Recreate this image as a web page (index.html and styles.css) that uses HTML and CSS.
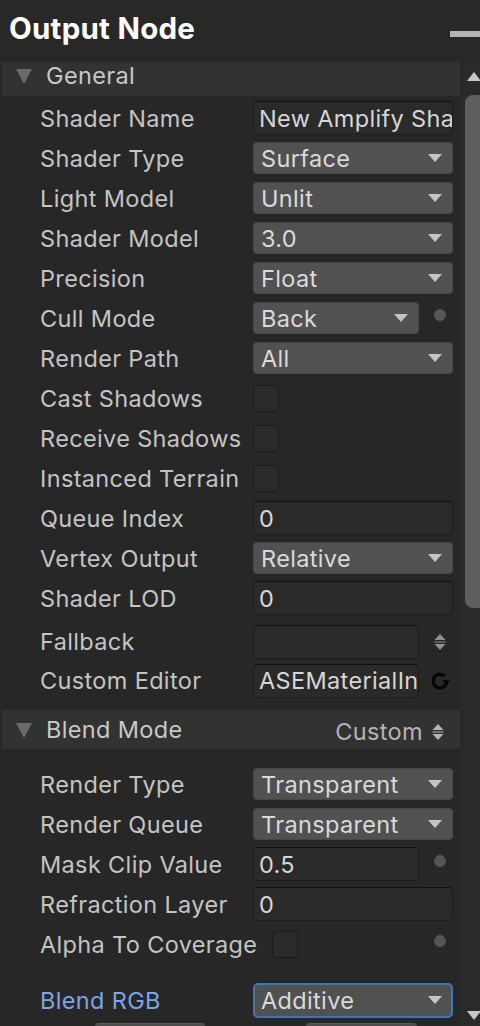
FILE: index.html
```html
<!DOCTYPE html>
<html>
<head>
<meta charset="utf-8">
<link rel="stylesheet" href="styles.css">
</head>
<body>
<div class="titlebar">
  <span class="title">Output Node</span>
  <span class="minbar"></span>
</div>
<div class="main">
  <div class="panel">
    <div class="section-head general"><span class="tri"></span><span class="head-text">General</span></div>
    <div class="rows first">
      <div class="row"><span class="label">Shader Name</span><div class="control"><div class="field text">New Amplify Shader</div></div></div>
      <div class="row"><span class="label">Shader Type</span><div class="control"><div class="field dd">Surface<span class="arrow"></span></div></div></div>
      <div class="row"><span class="label">Light Model</span><div class="control"><div class="field dd">Unlit<span class="arrow"></span></div></div></div>
      <div class="row"><span class="label">Shader Model</span><div class="control"><div class="field dd">3.0<span class="arrow"></span></div></div></div>
      <div class="row"><span class="label">Precision</span><div class="control"><div class="field dd">Float<span class="arrow"></span></div></div></div>
      <div class="row"><span class="label">Cull Mode</span><div class="control"><div class="field dd">Back<span class="arrow"></span></div><span class="icon"><span class="dot"></span></span></div></div>
      <div class="row"><span class="label">Render Path</span><div class="control"><div class="field dd">All<span class="arrow"></span></div></div></div>
      <div class="row"><span class="label">Cast Shadows</span><div class="control"><span class="check"></span></div></div>
      <div class="row"><span class="label">Receive Shadows</span><div class="control"><span class="check"></span></div></div>
      <div class="row"><span class="label">Instanced Terrain</span><div class="control"><span class="check"></span></div></div>
      <div class="row"><span class="label">Queue Index</span><div class="control"><div class="field text">0</div></div></div>
      <div class="row"><span class="label">Vertex Output</span><div class="control"><div class="field dd">Relative<span class="arrow"></span></div></div></div>
      <div class="row"><span class="label">Shader LOD</span><div class="control"><div class="field text">0</div></div></div>
    </div>
    <div class="rows tight">
      <div class="row"><span class="label">Fallback</span><div class="control"><div class="field text"></div><span class="icon">
        <svg width="12" height="18" viewBox="0 0 12 18"><path d="M6 1 L11.5 7 L0.5 7 Z M0.5 11 L11.5 11 L6 17 Z" fill="#8f8f8f"/><rect x="0.5" y="8.5" width="11" height="1" fill="#8f8f8f"/></svg>
      </span></div></div>
      <div class="row"><span class="label">Custom Editor</span><div class="control"><div class="field text">ASEMaterialInspector</div><span class="icon">
        <svg width="20" height="20" viewBox="0 0 20 20"><path d="M14.6 5.2 A6.8 6.8 0 1 0 16.6 11.2" fill="none" stroke="#050505" stroke-width="3.2"/><path d="M12.2 9 L19.8 9 L16.4 14 Z" fill="#050505"/></svg>
      </span></div></div>
    </div>
    <div class="section-head blend"><span class="tri"></span><span class="head-text">Blend Mode</span><span class="head-right">Custom<svg width="12" height="18" viewBox="0 0 12 18"><path d="M6 1 L11.5 7 L0.5 7 Z M0.5 11 L11.5 11 L6 17 Z" fill="#b4b4b4"/><rect x="0.5" y="8.5" width="11" height="1" fill="#b4b4b4"/></svg></span></div>
    <div class="rows second">
      <div class="row"><span class="label">Render Type</span><div class="control"><div class="field dd">Transparent<span class="arrow"></span></div></div></div>
      <div class="row"><span class="label">Render Queue</span><div class="control"><div class="field dd">Transparent<span class="arrow"></span></div></div></div>
      <div class="row"><span class="label">Mask Clip Value</span><div class="control"><div class="field text">0.5</div><span class="icon"><span class="dot"></span></span></div></div>
      <div class="row"><span class="label">Refraction Layer</span><div class="control"><div class="field text">0</div></div></div>
      <div class="row"><span class="label">Alpha To Coverage</span><div class="control"><span class="check shifted"></span><span class="spacer"></span><span class="icon"><span class="dot"></span></span></div></div>
    </div>
    <div class="rows third">
      <div class="row"><span class="label active">Blend RGB</span><div class="control"><div class="field dd focus">Additive<span class="arrow"></span></div></div></div>
    </div>
    <div class="partial">
      <span class="pbox one"></span>
      <span class="pbox two"></span>
    </div>
  </div>
  <div class="scrollbar">
    <span class="sarrow up"></span>
    <span class="thumb"></span>
    <span class="sarrow down"></span>
  </div>
</div>
</body>
</html>
```
FILE: styles.css
```css
html, body {
  margin: 0;
  padding: 0;
}
body {
  width: 480px;
  height: 1026px;
  overflow: hidden;
  background: #282828;
  font-family: Inter, "Noto Sans", sans-serif;
  color: #c4c4c4;
}
.titlebar {
  height: 62px;
  display: flex;
  align-items: flex-start;
  justify-content: space-between;
  padding-left: 9px;
  box-sizing: border-box;
}
.title {
  font-size: 29.5px;
  font-weight: 700;
  letter-spacing: 0.25px;
  color: #ffffff;
  margin-top: 10px;
  line-height: 36px;
}
.minbar {
  width: 30px;
  height: 6px;
  background: #b3b3b3;
  margin-top: 31px;
}
.main {
  display: flex;
  height: 964px;
}
.panel {
  width: 458px;
  margin-left: 2px;
  background: #272727;
  display: flex;
  flex-direction: column;
  overflow: hidden;
}
.section-head {
  height: 34px;
  flex: none;
  box-sizing: border-box;
  background: #323232;
  display: flex;
  align-items: center;
  padding-left: 14px;
  padding-right: 16px;
  font-size: 23.5px;
  letter-spacing: 0.35px;
  color: #c8c8c8;
}
.section-head.general {
  padding-bottom: 7px;
}
.section-head.blend {
  height: 39px;
  margin-top: 10px;
}
.tri {
  width: 0;
  height: 0;
  border-left: 8.5px solid transparent;
  border-right: 8.5px solid transparent;
  border-top: 15px solid #6b6b6b;
  margin-right: 14px;
  margin-top: 1px;
}
.head-text {
  flex: 1;
}
.head-right {
  display: flex;
  align-items: center;
  gap: 9px;
  color: #b4b4b4;
  margin-top: 4px;
}
.rows {
  display: flex;
  flex-direction: column;
  flex: none;
}
.rows.first {
  padding-top: 2px;
}
.rows.tight {
  margin-top: 4px;
}
.rows.tight .row {
  height: 39px;
}
.rows.second {
  margin-top: 15px;
}
.rows.third {
  margin-top: 16px;
}
.row {
  height: 40px;
  display: flex;
  align-items: center;
  padding-left: 38px;
}
.label {
  width: 213px;
  flex: none;
  font-size: 23.5px;
  letter-spacing: 0.35px;
  color: #c4c4c4;
  white-space: nowrap;
}
.label.active {
  color: #7ca4e6;
}
.control {
  width: 200px;
  display: flex;
  align-items: center;
}
.field {
  flex: 1;
  min-width: 0;
  box-sizing: border-box;
  border-radius: 4px;
  font-size: 23.5px;
  letter-spacing: 0.35px;
  white-space: nowrap;
  overflow: hidden;
  display: flex;
  align-items: center;
}
.field.text {
  height: 34px;
  background: #2a2a2a;
  border: 1px solid #1c1c1c;
  border-top-color: #101010;
  padding-left: 5px;
  color: #d6d6d6;
}
.field.dd {
  height: 32px;
  background: #515151;
  border: 1px solid #464646;
  padding-left: 7px;
  padding-right: 10px;
  color: #dadada;
  justify-content: space-between;
}
.field.dd.focus {
  height: 35px;
  border: 2px solid #3c77b8;
  border-radius: 5px;
  padding-left: 6px;
  padding-right: 9px;
}
.arrow {
  width: 0;
  height: 0;
  border-left: 7px solid transparent;
  border-right: 7px solid transparent;
  border-top: 8px solid #c4c4c4;
  flex: none;
}
.icon {
  width: 34px;
  flex: none;
  box-sizing: border-box;
  padding-left: 7px;
  display: flex;
  justify-content: center;
  align-items: center;
}
.dot {
  width: 12px;
  height: 12px;
  border-radius: 50%;
  background: #555555;
  margin-bottom: 6px;
}
.check {
  width: 26px;
  height: 27px;
  box-sizing: border-box;
  border: 1px solid #1a1a1a;
  background: #2a2a2a;
  border-radius: 3px;
}
.check.shifted {
  margin-left: 19px;
}
.spacer {
  flex: 1;
}
.partial {
  display: flex;
  margin-top: 3px;
  height: 20px;
  flex: none;
}
.pbox {
  height: 20px;
  background: #4e4e4e;
  border-radius: 4px;
  border-top: 1px solid #5a5a5a;
}
.pbox.one {
  width: 110px;
  margin-left: 93px;
}
.pbox.two {
  width: 111px;
  margin-left: 101px;
}
.scrollbar {
  width: 18px;
  margin-left: 2px;
  background: #2a2a2a;
  display: flex;
  flex-direction: column;
  align-items: flex-start;
}
.sarrow {
  width: 0;
  height: 0;
  border-left: 7px solid transparent;
  border-right: 7px solid transparent;
  margin-left: 5px;
}
.sarrow.up {
  border-bottom: 9px solid #c8c8c8;
  margin-top: 10px;
}
.thumb {
  width: 24px;
  height: 513px;
  margin-top: 14px;
  margin-left: 3px;
  background: #5e5e5e;
  border-radius: 8px;
}
.sarrow.down {
  border-top: 9px solid #c8c8c8;
  margin-top: auto;
  margin-bottom: 6px;
}
```
